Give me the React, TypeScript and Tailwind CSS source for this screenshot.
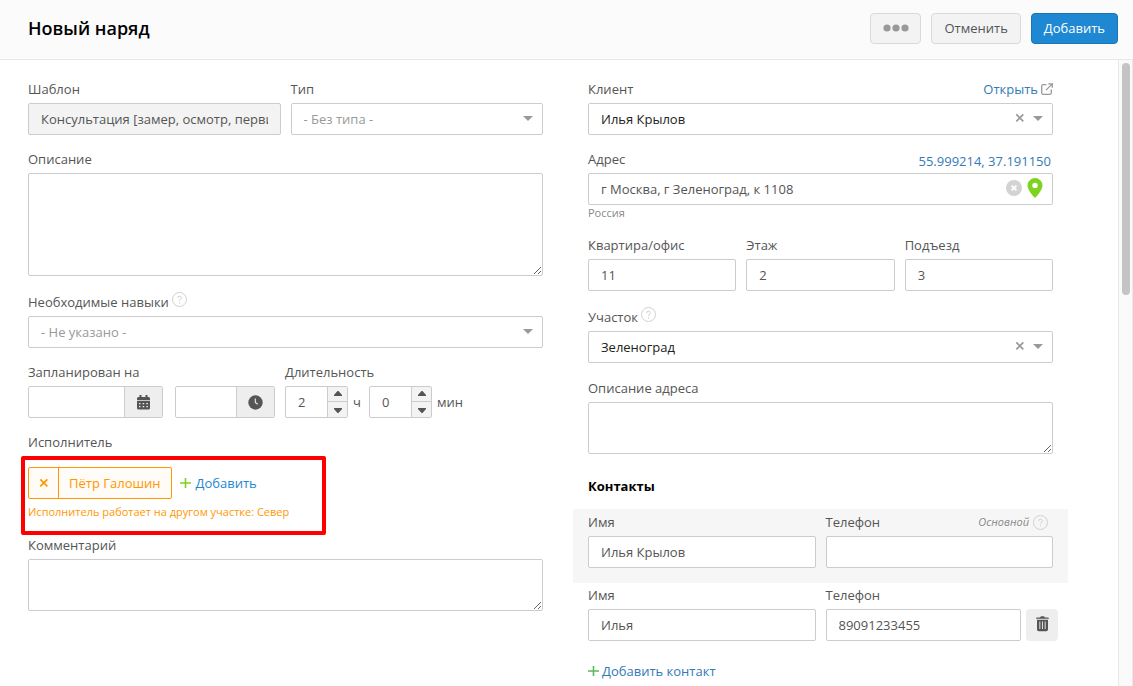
import { type ReactNode, type SelectHTMLAttributes, useState } from "react";
import clsx from "clsx";

const control =
  "h-8 w-full min-w-0 rounded-xs border border-[#ccc] bg-white px-3 text-[13px] text-[#555] outline-none read-only:bg-[#f3f3f3] focus:border-[#1e88d2]";

const area =
  "block w-full resize-y rounded-xs border border-[#ccc] bg-white px-3 py-1.5 text-[13px] outline-none focus:border-[#1e88d2]";

export default function App() {
  return (
    <div className="flex min-h-screen flex-col bg-white font-['Open_Sans','Noto_Sans',sans-serif] text-[13px] leading-5 text-[#555]">
      <Header />
      <div className="flex flex-1">
        <main className="grid flex-1 grid-cols-[515fr_465fr] gap-x-[45px] pt-[19px] pr-[65px] pl-7">
          <OrderColumn />
          <ClientColumn />
        </main>
        {/* Scroll track */}
        <div className="w-[15px] border-x border-[#e8e8e8] bg-[#fafafa] px-0.5 pt-[3px]">
          <div className="mx-auto h-[232px] w-2 rounded-full bg-[#c4c4c4]" />
        </div>
      </div>
    </div>
  );
}

function Header() {
  return (
    <header className="flex h-[60px] items-center justify-between border-b border-[#e7e7e7] bg-[#fbfbfb] pr-[15px] pb-[3px] pl-7">
      <h1 className="text-[18px] font-semibold text-black">Новый наряд</h1>
      <div className="flex gap-2.5">
        <button
          type="button"
          aria-label="Ещё"
          className="flex h-[31px] w-[51px] items-center justify-center rounded border border-[#d9d9d9] bg-[#f3f3f3] text-[#999]"
        >
          <svg width="26" height="8" viewBox="0 0 26 8" fill="currentColor">
            <circle cx="4" cy="4" r="3.6" />
            <circle cx="13" cy="4" r="3.6" />
            <circle cx="22" cy="4" r="3.6" />
          </svg>
        </button>
        <button
          type="button"
          className="h-[31px] rounded border border-[#d9d9d9] bg-[#f3f3f3] px-3"
        >
          Отменить
        </button>
        <button
          type="button"
          className="h-[31px] rounded border border-[#1a75b5] bg-[#1e88d2] px-3 font-medium text-white"
        >
          Добавить
        </button>
      </div>
    </header>
  );
}

function OrderColumn() {
  return (
    <div>
      <div className="grid grid-cols-2 gap-2.5">
        <Field id="template" label="Шаблон">
          <input
            id="template"
            readOnly
            defaultValue="Консультация [замер, осмотр, первичный выезд]"
            className={control}
          />
        </Field>
        <Field id="type" label="Тип">
          <Select id="type" className="text-[#999]">
            <option>- Без типа -</option>
          </Select>
        </Field>
      </div>

      <Field id="description" label="Описание" className="mt-3.5">
        <textarea id="description" className={clsx(area, "h-[103px]")} />
      </Field>

      <Field id="skills" label="Необходимые навыки" help className="mt-4">
        <Select id="skills" className="text-[#999]">
          <option>- Не указано -</option>
        </Select>
      </Field>

      {/* Schedule and duration */}
      <div className="mt-3.5 flex gap-2.5">
        <Field id="date" label="Запланирован на">
          <div className="flex gap-3">
            <Addon width="w-[135px]" label="Выбрать дату" icon={<CalendarIcon />}>
              <input id="date" className="w-full min-w-0 px-3 outline-none" />
            </Addon>
            <Addon width="w-[100px]" label="Выбрать время" icon={<ClockIcon />}>
              <input aria-label="Время" className="w-full min-w-0 px-3 outline-none" />
            </Addon>
          </div>
        </Field>
        <Field id="hours" label="Длительность">
          <div className="flex items-center">
            <Stepper id="hours" label="Часы" initial={2} />
            <span className="w-[21px] pl-[5px]">ч</span>
            <Stepper id="minutes" label="Минуты" initial={0} />
            <span className="pl-[5px]">мин</span>
          </div>
        </Field>
      </div>

      {/* Performer */}
      <div className="mt-3.5">
        <div>Исполнитель</div>
        <div className="relative mt-[15px] mb-2">
          <div className="pointer-events-none absolute -top-[11px] -left-[7px] h-[79px] w-[305px] rounded-xs border-4 border-[#ff0000]" />
          <div className="flex items-center gap-2">
            <div className="flex h-8 rounded-xs border border-[#ff9800] bg-[#fffbf6] text-[#ff9800]">
              <button
                type="button"
                aria-label="Убрать исполнителя"
                className="flex w-[30px] items-center justify-center border-r border-[#ff9800]"
              >
                <CrossIcon />
              </button>
              <span className="px-2.5 leading-[30px]">Пётр Галошин</span>
            </div>
            <button type="button" className="flex items-center gap-[5px] text-[#1e88d2]">
              <PlusIcon className="text-[#7ed321]" />
              Добавить
            </button>
          </div>
          <p className="mt-1 text-[11px] leading-[18px] text-[#ff9800]">
            Исполнитель работает на другом участке: Север
          </p>
        </div>
      </div>

      <Field id="comment" label="Комментарий" className="mt-3.5">
        <textarea id="comment" className={clsx(area, "h-[52px]")} />
      </Field>
    </div>
  );
}

function ClientColumn() {
  return (
    <div>
      <Field
        id="client"
        label="Клиент"
        aside={
          <a href="#client" className="flex items-center gap-[3px] text-[#337ab7]">
            Открыть
            <ExternalIcon />
          </a>
        }
      >
        <Select id="client" clearable className="text-[#222]">
          <option>Илья Крылов</option>
        </Select>
      </Field>

      <Field
        id="address"
        label="Адрес"
        className="mt-3.5"
        aside={
          <a href="#map" className="pt-0.5 pr-0.5 text-[#337ab7]">
            55.999214, 37.191150
          </a>
        }
      >
        <div className="relative">
          <input
            id="address"
            defaultValue="г Москва, г Зеленоград, к 1108"
            className={clsx(control, "pr-14")}
          />
          <div className="absolute inset-y-0 right-2.5 flex items-center gap-[5px] pb-0.5">
            <button type="button" aria-label="Очистить адрес">
              <svg width="16" height="16" viewBox="0 0 16 16" className="block">
                <circle cx="8" cy="8" r="8" fill="#d3d3d3" />
                <path d="M5.6 5.6l4.8 4.8M10.4 5.6l-4.8 4.8" stroke="#fff" strokeWidth="1.8" />
              </svg>
            </button>
            <button type="button" aria-label="Показать на карте">
              <svg width="16" height="20" viewBox="0 0 16 20" className="block">
                <path
                  fillRule="evenodd"
                  fill="#7ed321"
                  d="M8 0a7.5 7.5 0 0 0-7.5 7.4C.5 12.5 8 20 8 20s7.5-7.5 7.5-12.6A7.5 7.5 0 0 0 8 0zm0 4.7a2.7 2.7 0 1 1 0 5.4 2.7 2.7 0 0 1 0-5.4z"
                />
              </svg>
            </button>
          </div>
        </div>
        <div className="text-[11px] leading-4 text-[#888]">Россия</div>
      </Field>

      <div className="mt-3.5 grid grid-cols-3 gap-2.5">
        <Field id="flat" label="Квартира/офис">
          <input id="flat" defaultValue="11" className={control} />
        </Field>
        <Field id="floor" label="Этаж">
          <input id="floor" defaultValue="2" className={control} />
        </Field>
        <Field id="entrance" label="Подъезд">
          <input id="entrance" defaultValue="3" className={control} />
        </Field>
      </div>

      <Field id="zone" label="Участок" help className="mt-4">
        <Select id="zone" clearable className="text-[#222]">
          <option>Зеленоград</option>
        </Select>
      </Field>

      <Field id="address-note" label="Описание адреса" className="mt-[15px]">
        <textarea id="address-note" className={clsx(area, "h-[52px]")} />
      </Field>

      {/* Contacts */}
      <h2 className="mt-[22px] mb-[13px] font-bold text-black">Контакты</h2>
      <div className="-mx-[15px] grid grid-cols-2 gap-2.5 bg-[#f6f6f6] px-[15px] pt-[3px] pb-[15px]">
        <Field id="name-1" label="Имя">
          <input id="name-1" defaultValue="Илья Крылов" className={control} />
        </Field>
        <Field
          id="phone-1"
          label="Телефон"
          aside={
            <span className="flex items-center gap-1 pr-[5px] text-[11px] leading-4 text-[#888] italic">
              Основной
              <HelpIcon />
            </span>
          }
        >
          <input id="phone-1" className={control} />
        </Field>
      </div>
      <div className="grid grid-cols-2 gap-2.5 pt-0.5">
        <Field id="name-2" label="Имя">
          <input id="name-2" defaultValue="Илья" className={control} />
        </Field>
        <Field id="phone-2" label="Телефон">
          <div className="-mr-[5px] flex gap-[5px]">
            <input id="phone-2" defaultValue="89091233455" className={control} />
            <button
              type="button"
              aria-label="Удалить контакт"
              className="flex size-8 shrink-0 items-center justify-center rounded bg-[#eee] pb-0.5"
            >
              <TrashIcon />
            </button>
          </div>
        </Field>
      </div>
      <button type="button" className="mt-5 flex items-center gap-[3px] text-[#337ab7]">
        <PlusIcon className="text-[#5cb85c]" />
        Добавить контакт
      </button>
    </div>
  );
}

function Field({
  id,
  label,
  help,
  aside,
  className,
  children,
}: {
  id: string;
  label: string;
  help?: boolean;
  aside?: ReactNode;
  className?: string;
  children: ReactNode;
}) {
  return (
    <div className={className}>
      <div className="mb-1 flex h-5 justify-between">
        <div className="flex gap-[3px]">
          <label htmlFor={id}>{label}</label>
          {help && <HelpIcon />}
        </div>
        {aside}
      </div>
      {children}
    </div>
  );
}

function Select({
  clearable,
  className,
  ...props
}: SelectHTMLAttributes<HTMLSelectElement> & { clearable?: boolean }) {
  return (
    <div className="relative">
      <select
        {...props}
        className={clsx(
          "h-8 w-full appearance-none rounded-xs border border-[#ccc] bg-white px-3 outline-none focus:border-[#1e88d2]",
          className
        )}
      />
      <div className="pointer-events-none absolute inset-y-0 right-2.5 flex items-center gap-2 pb-0.5 text-[#999]">
        {clearable && (
          <button type="button" aria-label="Очистить" className="pointer-events-auto">
            <CrossIcon />
          </button>
        )}
        <svg width="10" height="5" viewBox="0 0 10 5" fill="currentColor">
          <path d="M0 0h10L5 5z" />
        </svg>
      </div>
    </div>
  );
}

function Addon({
  width,
  label,
  icon,
  children,
}: {
  width: string;
  label: string;
  icon: ReactNode;
  children: ReactNode;
}) {
  return (
    <div className={clsx("flex h-8 overflow-hidden rounded-xs border border-[#ccc]", width)}>
      {children}
      <button
        type="button"
        aria-label={label}
        className="flex w-[38px] shrink-0 items-center justify-center border-l border-[#ccc] bg-[#eee]"
      >
        {icon}
      </button>
    </div>
  );
}

function Stepper({ id, label, initial }: { id: string; label: string; initial: number }) {
  const [value, setValue] = useState(initial);

  return (
    <div className="flex h-8 w-[63px] overflow-hidden rounded-xs border border-[#ccc]">
      <input
        id={id}
        aria-label={label}
        value={value}
        onChange={(e) => setValue(Number(e.target.value) || 0)}
        className="w-full min-w-0 pl-3 outline-none"
      />
      <div className="flex w-5 shrink-0 flex-col border-l border-[#ccc] bg-[#f3f3f3]">
        <button
          type="button"
          aria-label="Больше"
          onClick={() => setValue(value + 1)}
          className="flex flex-1 items-center justify-center border-b border-[#ccc]"
        >
          <svg width="8" height="5" viewBox="0 0 8 5" fill="currentColor">
            <path d="M0 5V4l3.500-4h1L8 4v1z" />
          </svg>
        </button>
        <button
          type="button"
          aria-label="Меньше"
          onClick={() => setValue(Math.max(0, value - 1))}
          className="flex flex-1 items-center justify-center pt-0.5"
        >
          <svg width="8" height="5" viewBox="0 0 8 5" fill="currentColor">
            <path d="M0 0v1l3.500 4h1L8 1V0z" />
          </svg>
        </button>
      </div>
    </div>
  );
}

function HelpIcon() {
  return (
    <svg width="15" height="15" viewBox="0 0 15 15" fill="none" stroke="#d0d0d0">
      <circle cx="7.5" cy="7.5" r="7" />
      <path d="M5.7 6a1.8 1.8 0 1 1 2.7 1.5c-.6.4-.9.7-.9 1.4M7.5 10.2v1.2" />
    </svg>
  );
}

function CrossIcon() {
  return (
    <svg width="10" height="10" viewBox="0 0 10 10" fill="none" stroke="currentColor" strokeWidth="1.7">
      <path d="M1.3 1.3l7 7M8.3 1.3l-7 7" />
    </svg>
  );
}

function PlusIcon({ className }: { className: string }) {
  return (
    <svg
      width="11"
      height="11"
      viewBox="0 0 11 11"
      fill="none"
      stroke="currentColor"
      strokeWidth="1.6"
      className={className}
    >
      <path d="M5.5 0v10M0 5h11" />
    </svg>
  );
}

function ExternalIcon() {
  return (
    <svg width="12" height="12" viewBox="0 0 12 12" fill="none" stroke="#999" strokeWidth="1.3">
      <path d="M5.5 1.7H2.2A1.5 1.5 0 0 0 .7 3.2v6.6a1.5 1.5 0 0 0 1.5 1.5h6.600a1.5 1.5 0 0 0 1.5-1.5V6.5" />
      <path d="M7.3.8h4v4M11 1.1L5 7.1" />
    </svg>
  );
}

function CalendarIcon() {
  return (
    <svg width="13" height="15" viewBox="0 0 13 15" fill="#555">
      <path d="M2.500 0h2v2h4V0h2v2h1A1.5 1.5 0 0 1 13 3.5V5H0V3.5A1.5 1.5 0 0 1 1.5 2h1z" />
      <path
        fillRule="evenodd"
        d="M0 5.700h13v7.300a1.500 1.500 0 0 1-1.500 1.500h-10A1.500 1.500 0 0 1 0 13zM2 8v1.300h1.500V8zm3.700 0v1.300h1.500V8zm3.700 0v1.300h1.500V8zM2 11v1.300h1.500V11zm3.700 0v1.300h1.500V11zm3.700 0v1.300h1.500V11z"
      />
    </svg>
  );
}

function ClockIcon() {
  return (
    <svg width="15" height="15" viewBox="0 0 15 15">
      <circle cx="7.5" cy="7.5" r="7.2" fill="#555" />
      <path d="M7.300 3.400v4l2.400 1.800" fill="none" stroke="#eee" strokeWidth="1.100" />
    </svg>
  );
}

function TrashIcon() {
  return (
    <svg width="13" height="16" viewBox="0 0 13 16" fill="#555">
      <path d="M0 2.700c0-.8.600-1.200 1.500-1.200h2.500C4.300.600 5 .3 6.500.3S8.700.6 9 1.500h2.500c.9 0 1.500.4 1.500 1.200z" />
      <path
        fillRule="evenodd"
        d="M1 3.800h11v9.700a1.700 1.700 0 0 1-1.700 1.700H2.700A1.700 1.700 0 0 1 1 13.500zM3.400 5.600v7.400h.9V5.600zm2.600 0v7.400h.9V5.600zm2.700 0v7.400h.9V5.600z"
      />
    </svg>
  );
}
